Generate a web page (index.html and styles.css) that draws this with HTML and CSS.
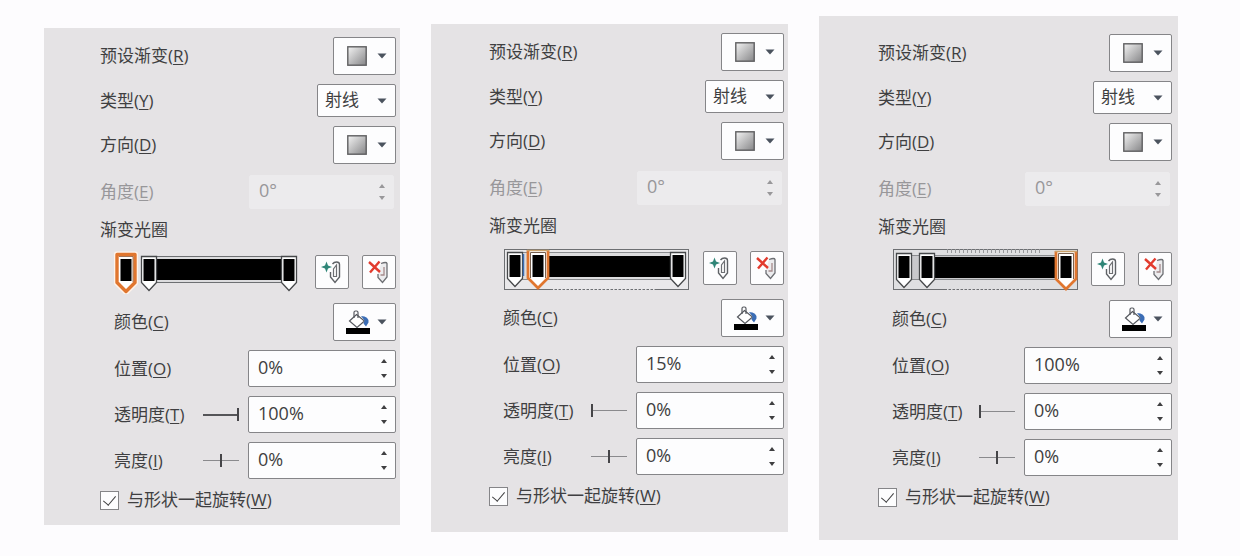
FILE: index.html
```html
<!DOCTYPE html>
<html lang="zh-CN">
<head>
  <meta charset="UTF-8" />
  <meta name="viewport" content="width=device-width, initial-scale=1.0"/>
  <title>渐变填充</title>
  <link rel="stylesheet" href="styles.css">
</head>
<body>
  <!-- Shared icons -->
  <svg class="defs" width="0" height="0" aria-hidden="true">
    <defs>
      <linearGradient id="swatch-fill" x1="0" y1="0" x2="1" y2="1">
        <stop offset="0" stop-color="#f4f4f4"/>
        <stop offset="1" stop-color="#858587"/>
      </linearGradient>
      <symbol id="swatch" viewBox="0 0 20 20">
        <rect x="0.8" y="0.8" width="18.4" height="18.4" fill="url(#swatch-fill)" stroke="#5f5f61" stroke-width="1.4"/>
      </symbol>
      <symbol id="arrow" viewBox="0 0 10 6">
        <path d="M0.5 0.5h9L5 5.5z" fill="#4b535e"/>
      </symbol>
      <symbol id="up" viewBox="0 0 6 4">
        <path d="M0 4L3 0l3 4z" fill="currentColor"/>
      </symbol>
      <symbol id="down" viewBox="0 0 6 4">
        <path d="M0 0h6L3 4z" fill="currentColor"/>
      </symbol>
      <symbol id="bucket" viewBox="0 0 26 24">
        <path d="M4.500 11L11.500 4.500l8 6.500-7.500 6.500z" fill="#fff" stroke="#55585e" stroke-width="1.200"/>
        <path d="M9 8V2.500q0-1.500 1.500-1.500h1q1.500 0 1.500 1.500V8" fill="none" stroke="#55585e" stroke-width="1.200"/>
        <path d="M16 6q8 0 7.500 6.500l-2.500 4-2.500-3 1-3z" fill="#3b6db5"/>
        <rect x="1" y="18" width="24" height="6" fill="#000"/>
      </symbol>
      <symbol id="add-stop" viewBox="0 0 24 26">
        <path d="M12.500 5q1.500-2 4-2 3 0 3 2.500V18L15 23.500 10.500 18v-5" fill="none" stroke="#5f6266" stroke-width="1.400"/>
        <path d="M13.500 17.500V10l3-4v11.500z" fill="#fff" stroke="#6d6f73" stroke-width="1.200"/>
        <path d="M6.500 2.500L8 6.500l4 1.500-4 1.500-1.500 4L5 9.500 1 8l4-1.500z" fill="#2f8577"/>
      </symbol>
      <symbol id="remove-stop" viewBox="0 0 24 26">
        <path d="M14 4.500q5.500-2 6 0V18L15.500 23.500 11 18.500V15" fill="#ececee" stroke="#6d6f73" stroke-width="1.300"/>
        <path d="M17 8v8h-3.500" fill="none" stroke="#a58a8c" stroke-width="1.300"/>
        <path d="M2 3L13 13M12.500 2.500L3 13.500" fill="none" stroke="#e23b2e" stroke-width="2.400"/>
      </symbol>
      <symbol id="stop" viewBox="0 0 24 45">
        <path d="M4.500 7.500h15v26L12 41.500l-7.500-8z" fill="#fff" stroke="#46484a" stroke-width="1.300"/>
        <rect x="6.500" y="10" width="11" height="22" fill="#000"/>
      </symbol>
      <symbol id="stop-active" viewBox="0 0 24 45">
        <path d="M2.500 5h19v29L12 43.500 2.500 34z" fill="#fff" stroke="#fff3ea" stroke-width="5" stroke-linejoin="round"/>
        <path d="M3 5.500h18v28L12 42.500 3 33.500z" fill="#fff" stroke="#e0762f" stroke-width="3.400" stroke-linejoin="round"/>
        <path d="M5 7.500h14v25.500" fill="none" stroke="#8c5a3c" stroke-width="0.800"/>
        <rect x="6.500" y="10" width="11" height="22" fill="#000"/>
      </symbol>
      <!-- Active stop cut off by the frame of the bar -->
      <symbol id="stop-framed" viewBox="0 0 24 45">
        <path d="M2 5h20v28L12 43 2 33z" fill="#fff"/>
        <path d="M2 5v28l10 10 10-10V5" fill="none" stroke="#e0762f" stroke-width="2.800"/>
        <path d="M1 5.500h22" stroke="#c9a06a" stroke-width="1.500"/>
        <path d="M4.500 33V7.500h15V33" fill="none" stroke="#77604f" stroke-width="1"/>
        <rect x="6.500" y="10" width="11" height="22" fill="#000"/>
      </symbol>
    </defs>
  </svg>

  <main class="panels">
    <form class="panel">
      <div class="row">
        <label for="preset-1">预设渐变(<u>R</u>)</label>
        <button type="button" class="drop" id="preset-1"><svg class="swatch"><use href="#swatch"/></svg><svg class="arrow"><use href="#arrow"/></svg></button>
      </div>
      <div class="row">
        <label for="type-1">类型(<u>Y</u>)</label>
        <div class="select"><select id="type-1"><option>射线</option></select><svg class="arrow"><use href="#arrow"/></svg></div>
      </div>
      <div class="row">
        <label for="direction-1">方向(<u>D</u>)</label>
        <button type="button" class="drop" id="direction-1"><svg class="swatch"><use href="#swatch"/></svg><svg class="arrow"><use href="#arrow"/></svg></button>
      </div>
      <div class="row disabled">
        <label for="angle-1">角度(<u>E</u>)</label>
        <div class="spin">
          <input type="text" id="angle-1" value="0°" disabled>
          <div class="spin-buttons">
            <button type="button" aria-label="增加" disabled><svg><use href="#up"/></svg></button>
            <button type="button" aria-label="减少" disabled><svg><use href="#down"/></svg></button>
          </div>
        </div>
      </div>
      <div class="row title">渐变光圈</div>
      <div class="row stops indent">
        <svg class="gradient" viewBox="0 0 186 45">
          <rect x="30" y="7.500" width="146" height="26" fill="#dcdcde" stroke="#6d6f72"/>
          <rect x="30" y="10" width="146" height="21" fill="#000"/>
          <use href="#stop" x="23" width="24" height="45"/>
          <use href="#stop" x="163" width="24" height="45"/>
          <use href="#stop-active" x="0" width="24" height="45"/>
        </svg>
        <div class="tools">
          <button type="button" aria-label="添加渐变光圈"><svg><use href="#add-stop"/></svg></button>
          <button type="button" aria-label="删除渐变光圈"><svg><use href="#remove-stop"/></svg></button>
        </div>
      </div>
      <div class="row indent">
        <label for="color-1">颜色(<u>C</u>)</label>
        <button type="button" class="drop" id="color-1"><svg class="bucket"><use href="#bucket"/></svg><svg class="arrow"><use href="#arrow"/></svg></button>
      </div>
      <div class="row indent">
        <label for="position-1">位置(<u>O</u>)</label>
        <div class="spin">
          <input type="text" id="position-1" value="0%">
          <div class="spin-buttons">
            <button type="button" aria-label="增加"><svg><use href="#up"/></svg></button>
            <button type="button" aria-label="减少"><svg><use href="#down"/></svg></button>
          </div>
        </div>
      </div>
      <div class="row indent">
        <label for="alpha-1">透明度(<u>T</u>)</label>
        <input type="range" class="slider full" aria-label="透明度" value="100">
        <div class="spin">
          <input type="text" id="alpha-1" value="100%">
          <div class="spin-buttons">
            <button type="button" aria-label="增加"><svg><use href="#up"/></svg></button>
            <button type="button" aria-label="减少"><svg><use href="#down"/></svg></button>
          </div>
        </div>
      </div>
      <div class="row indent">
        <label for="light-1">亮度(<u>I</u>)</label>
        <input type="range" class="slider" aria-label="亮度" value="50">
        <div class="spin">
          <input type="text" id="light-1" value="0%">
          <div class="spin-buttons">
            <button type="button" aria-label="增加"><svg><use href="#up"/></svg></button>
            <button type="button" aria-label="减少"><svg><use href="#down"/></svg></button>
          </div>
        </div>
      </div>
      <div class="row check">
        <input type="checkbox" id="rotate-1" checked>
        <label for="rotate-1">与形状一起旋转(<u>W</u>)</label>
      </div>
    </form>

    <form class="panel second">
      <div class="row">
        <label for="preset-2">预设渐变(<u>R</u>)</label>
        <button type="button" class="drop" id="preset-2"><svg class="swatch"><use href="#swatch"/></svg><svg class="arrow"><use href="#arrow"/></svg></button>
      </div>
      <div class="row">
        <label for="type-2">类型(<u>Y</u>)</label>
        <div class="select"><select id="type-2"><option>射线</option></select><svg class="arrow"><use href="#arrow"/></svg></div>
      </div>
      <div class="row">
        <label for="direction-2">方向(<u>D</u>)</label>
        <button type="button" class="drop" id="direction-2"><svg class="swatch"><use href="#swatch"/></svg><svg class="arrow"><use href="#arrow"/></svg></button>
      </div>
      <div class="row disabled">
        <label for="angle-2">角度(<u>E</u>)</label>
        <div class="spin">
          <input type="text" id="angle-2" value="0°" disabled>
          <div class="spin-buttons">
            <button type="button" aria-label="增加" disabled><svg><use href="#up"/></svg></button>
            <button type="button" aria-label="减少" disabled><svg><use href="#down"/></svg></button>
          </div>
        </div>
      </div>
      <div class="row title">渐变光圈</div>
      <div class="row stops indent">
        <svg class="gradient" viewBox="0 0 186 45">
          <rect x="1.500" y="4.500" width="184" height="40" fill="#e9e8ea" stroke="#6d6f72"/>
          <path d="M50 44.500h104" stroke="#e9e8ea" stroke-dasharray="1.500 2.500"/>
          <rect x="12" y="7.500" width="163" height="27" fill="#dcdcde" stroke="#8b8d90"/>
          <rect x="30" y="11" width="146" height="21" fill="#000"/>
          <use href="#stop" x="0" width="24" height="45"/>
          <path d="M20.500 9v22" stroke="#3b6db5" stroke-width="1.500"/>
          <use href="#stop" x="163" width="24" height="45"/>
          <use href="#stop-framed" x="23" width="24" height="45"/>
        </svg>
        <div class="tools">
          <button type="button" aria-label="添加渐变光圈"><svg><use href="#add-stop"/></svg></button>
          <button type="button" aria-label="删除渐变光圈"><svg><use href="#remove-stop"/></svg></button>
        </div>
      </div>
      <div class="row indent">
        <label for="color-2">颜色(<u>C</u>)</label>
        <button type="button" class="drop" id="color-2"><svg class="bucket"><use href="#bucket"/></svg><svg class="arrow"><use href="#arrow"/></svg></button>
      </div>
      <div class="row indent">
        <label for="position-2">位置(<u>O</u>)</label>
        <div class="spin">
          <input type="text" id="position-2" value="15%">
          <div class="spin-buttons">
            <button type="button" aria-label="增加"><svg><use href="#up"/></svg></button>
            <button type="button" aria-label="减少"><svg><use href="#down"/></svg></button>
          </div>
        </div>
      </div>
      <div class="row indent">
        <label for="alpha-2">透明度(<u>T</u>)</label>
        <input type="range" class="slider" aria-label="透明度" value="0">
        <div class="spin">
          <input type="text" id="alpha-2" value="0%">
          <div class="spin-buttons">
            <button type="button" aria-label="增加"><svg><use href="#up"/></svg></button>
            <button type="button" aria-label="减少"><svg><use href="#down"/></svg></button>
          </div>
        </div>
      </div>
      <div class="row indent">
        <label for="light-2">亮度(<u>I</u>)</label>
        <input type="range" class="slider" aria-label="亮度" value="50">
        <div class="spin">
          <input type="text" id="light-2" value="0%">
          <div class="spin-buttons">
            <button type="button" aria-label="增加"><svg><use href="#up"/></svg></button>
            <button type="button" aria-label="减少"><svg><use href="#down"/></svg></button>
          </div>
        </div>
      </div>
      <div class="row check">
        <input type="checkbox" id="rotate-2" checked>
        <label for="rotate-2">与形状一起旋转(<u>W</u>)</label>
      </div>
    </form>

    <form class="panel third">
      <div class="row">
        <label for="preset-3">预设渐变(<u>R</u>)</label>
        <button type="button" class="drop" id="preset-3"><svg class="swatch"><use href="#swatch"/></svg><svg class="arrow"><use href="#arrow"/></svg></button>
      </div>
      <div class="row">
        <label for="type-3">类型(<u>Y</u>)</label>
        <div class="select"><select id="type-3"><option>射线</option></select><svg class="arrow"><use href="#arrow"/></svg></div>
      </div>
      <div class="row">
        <label for="direction-3">方向(<u>D</u>)</label>
        <button type="button" class="drop" id="direction-3"><svg class="swatch"><use href="#swatch"/></svg><svg class="arrow"><use href="#arrow"/></svg></button>
      </div>
      <div class="row disabled">
        <label for="angle-3">角度(<u>E</u>)</label>
        <div class="spin">
          <input type="text" id="angle-3" value="0°" disabled>
          <div class="spin-buttons">
            <button type="button" aria-label="增加" disabled><svg><use href="#up"/></svg></button>
            <button type="button" aria-label="减少" disabled><svg><use href="#down"/></svg></button>
          </div>
        </div>
      </div>
      <div class="row title">渐变光圈</div>
      <div class="row stops indent">
        <svg class="gradient" viewBox="0 0 186 45">
          <rect x="1.500" y="3.500" width="184" height="40" fill="#dfdfe1" stroke="#6d6f72"/>
          <path d="M55 5h95" stroke="#98999c" stroke-width="4" stroke-dasharray="1 3"/>
          <path d="M55 43.500h95" stroke="#dfdfe1" stroke-dasharray="1.500 2.500"/>
          <rect x="12" y="9.500" width="163" height="24" fill="#c9c9cc" stroke="#8b8d90"/>
          <rect x="30" y="11" width="146" height="21" fill="#000"/>
          <use href="#stop" x="0" width="24" height="45"/>
          <use href="#stop" x="23" width="24" height="45"/>
          <use href="#stop-framed" x="162" width="24" height="45"/>
        </svg>
        <div class="tools">
          <button type="button" aria-label="添加渐变光圈"><svg><use href="#add-stop"/></svg></button>
          <button type="button" aria-label="删除渐变光圈"><svg><use href="#remove-stop"/></svg></button>
        </div>
      </div>
      <div class="row indent">
        <label for="color-3">颜色(<u>C</u>)</label>
        <button type="button" class="drop" id="color-3"><svg class="bucket"><use href="#bucket"/></svg><svg class="arrow"><use href="#arrow"/></svg></button>
      </div>
      <div class="row indent">
        <label for="position-3">位置(<u>O</u>)</label>
        <div class="spin">
          <input type="text" id="position-3" value="100%">
          <div class="spin-buttons">
            <button type="button" aria-label="增加"><svg><use href="#up"/></svg></button>
            <button type="button" aria-label="减少"><svg><use href="#down"/></svg></button>
          </div>
        </div>
      </div>
      <div class="row indent">
        <label for="alpha-3">透明度(<u>T</u>)</label>
        <input type="range" class="slider" aria-label="透明度" value="0">
        <div class="spin">
          <input type="text" id="alpha-3" value="0%">
          <div class="spin-buttons">
            <button type="button" aria-label="增加"><svg><use href="#up"/></svg></button>
            <button type="button" aria-label="减少"><svg><use href="#down"/></svg></button>
          </div>
        </div>
      </div>
      <div class="row indent">
        <label for="light-3">亮度(<u>I</u>)</label>
        <input type="range" class="slider" aria-label="亮度" value="50">
        <div class="spin">
          <input type="text" id="light-3" value="0%">
          <div class="spin-buttons">
            <button type="button" aria-label="增加"><svg><use href="#up"/></svg></button>
            <button type="button" aria-label="减少"><svg><use href="#down"/></svg></button>
          </div>
        </div>
      </div>
      <div class="row check">
        <input type="checkbox" id="rotate-3" checked>
        <label for="rotate-3">与形状一起旋转(<u>W</u>)</label>
      </div>
    </form>
  </main>
</body>
</html>
```
FILE: styles.css
```css
* {
  box-sizing: border-box;
}

body {
  margin: 0;
  background: #fdfcfe;
  color: #3f3f41;
  font-family: "Open Sans", "Noto Sans CJK SC", sans-serif;
  font-size: 17px;
  line-height: 20px;
}

.defs {
  display: block;
}

.panels {
  display: grid;
  grid-template-columns: 356fr 357fr 359fr;
  align-items: start;
  gap: 31px;
  padding: 16px 62px 16px 44px;
}

.panel {
  display: flex;
  flex-direction: column;
  gap: 9px;
  margin-top: 12px;
  padding: 9px 4px 13px 56px;
  background: #e5e3e5;
}

.second {
  margin-top: 8px;
  padding-bottom: 24px;
  padding-left: 58px;
}

.third {
  margin-top: 0;
  padding: 18px 6px 31px 59px;
}

.row {
  display: flex;
  align-items: center;
}

.row label {
  flex: 1;
  white-space: nowrap;
}

.indent {
  padding-left: 14px;
}

u {
  text-decoration-thickness: 1px;
  text-underline-offset: 2px;
}

button,
input,
select {
  margin: 0;
  color: inherit;
  font: inherit;
}

/* Drop-down buttons */
.drop,
select,
.tools button,
.spin {
  background: #fdfdfe;
  border: 1px solid #858588;
  border-radius: 2px;
}

.drop {
  display: flex;
  align-items: center;
  justify-content: space-between;
  width: 63px;
  height: 38px;
  padding: 0 8px 0 13px;
}

.swatch {
  width: 20px;
  height: 20px;
}

.bucket {
  width: 26px;
  height: 24px;
  margin-left: -2px;
}

.arrow {
  width: 10px;
  height: 6px;
}

.select {
  display: grid;
  align-items: center;
}

.select > * {
  grid-area: 1 / 1;
}

.select .arrow {
  justify-self: end;
  margin-right: 9px;
  pointer-events: none;
}

select {
  appearance: none;
  width: 79px;
  height: 33px;
  padding: 0 24px 2px 7px;
}

/* Number boxes */
.spin {
  display: flex;
  width: 148px;
  height: 37px;
}

.spin input {
  flex: 1;
  min-width: 0;
  padding: 0 0 4px 9px;
  background: none;
  border: 0;
  font-size: 18px;
}

.spin-buttons {
  display: flex;
  flex-direction: column;
  justify-content: space-between;
  width: 22px;
  padding: 5px 0;
}

.spin-buttons button {
  display: grid;
  place-items: center;
  height: 10px;
  padding: 0;
  background: none;
  border: 0;
}

.spin-buttons svg {
  width: 6px;
  height: 4px;
}

.disabled {
  min-height: 38px;
  padding-right: 2px;
  color: #98979a;
}

.disabled .spin {
  width: 145px;
  height: 34px;
  background: #ecebed;
  border-color: #ecebed;
}

/* Gradient stops */
.stops {
  justify-content: space-between;
}

.gradient {
  width: 186px;
  height: 45px;
}

.tools {
  display: flex;
  gap: 13px;
}

.tools button {
  display: grid;
  place-items: center;
  width: 34px;
  height: 34px;
  padding: 0;
}

.tools svg {
  width: 24px;
  height: 26px;
}

/* Sliders */
.slider {
  appearance: none;
  width: 36px;
  height: 14px;
  margin-right: 9px;
  background: linear-gradient(#8a8a8d, #8a8a8d) center / 100% 1px no-repeat;
}

.slider.full {
  background: linear-gradient(#555558, #555558) center / 100% 2px no-repeat;
}

.slider::-webkit-slider-thumb {
  appearance: none;
  width: 2px;
  height: 13px;
  background: #454548;
}

/* Rotate option */
.check {
  gap: 8px;
  height: 24px;
}

.check input {
  display: grid;
  place-items: center;
  appearance: none;
  width: 19px;
  height: 19px;
  background: #fdfdfe;
  border: 1px solid #858588;
}

.check input:checked::before {
  content: "";
  width: 6px;
  height: 11px;
  margin-bottom: 3px;
  border: solid #3f3f41;
  border-width: 0 1px 1px 0;
  transform: rotate(40deg);
}
```
